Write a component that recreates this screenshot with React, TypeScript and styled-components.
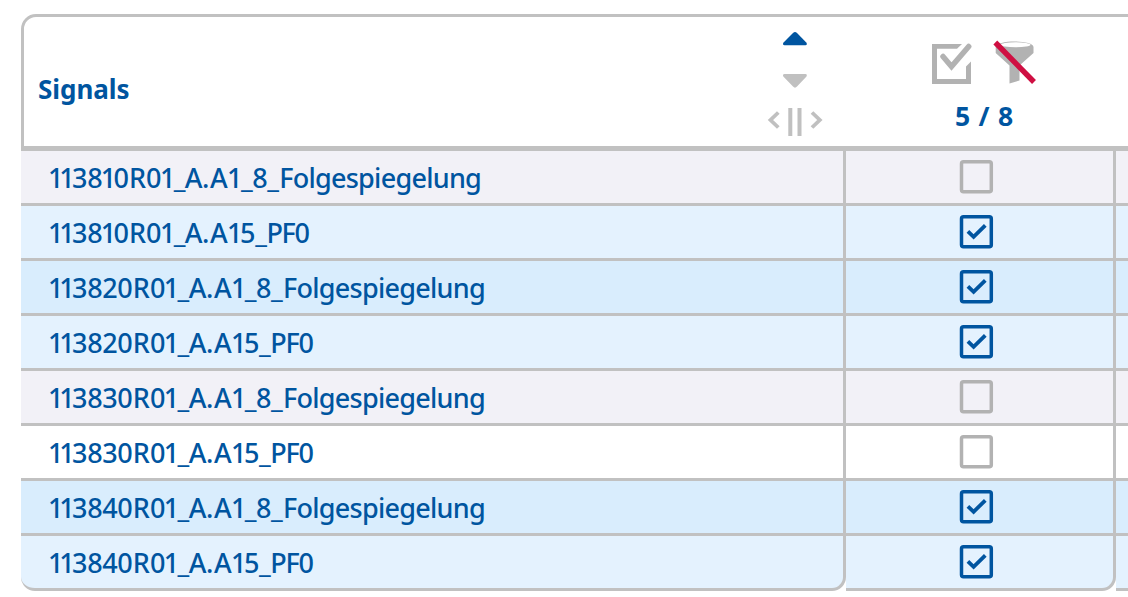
import React from "react";
import styled, { createGlobalStyle } from "styled-components";

const BLUE = "#0055a0";
const LINE = "#c1c1c1";
const FONT = '"Noto Sans", "Open Sans", sans-serif';

const Global = createGlobalStyle`
  body { margin: 0; background: #fff; overflow: hidden; }
  * { box-sizing: border-box; }
`;

const Page = styled.div`
  width: 1128px;
  height: 597px;
  padding: 14px 0 0 21px;
  overflow: hidden;
  font-family: ${FONT};
  color: ${BLUE};
`;

const Table = styled.div`
  width: 1377px;
`;

const Header = styled.div`
  display: grid;
  grid-template-columns: 822px 270px 1fr;
  height: 137px;
  border: 3px solid ${LINE};
  border-bottom: 5px solid ${LINE};
  border-radius: 15px 15px 0 0;
`;

const SignalsHead = styled.div`
  display: flex;
  justify-content: space-between;
  padding-left: 14px;
`;

const Title = styled.div`
  font-size: 26px;
  line-height: 36px;
  font-weight: 700;
  margin-top: 54px;
  letter-spacing: -0.05px;
`;

const CheckHead = styled.div`
  display: flex;
  flex-direction: column;
  align-items: center;
`;

const Icons = styled.div`
  display: flex;
  height: 50px;
  margin: 20px 0 0 7px;
`;

const Count = styled.div`
  font-size: 26.5px;
  line-height: 36px;
  font-weight: 700;
  word-spacing: 1.5px;
  margin: 11px 0 0 6px;
`;

const Row = styled.div<{ $bg: string }>`
  display: grid;
  grid-template-columns: 825px 270px 1fr;
  grid-template-rows: 55px;

  & > div {
    background: ${(p) => p.$bg};
    border-bottom: 3px solid ${LINE};
    border-right: 3px solid ${LINE};
  }
  &:last-child > div {
    border-bottom-right-radius: 14px;
  }
  &:last-child > div:first-child {
    border-bottom-left-radius: 14px;
  }
`;

const NameCell = styled.div`
  padding: 1px 0 0 27px;
  font-size: 27px;
  font-weight: 500;
  line-height: 51px;
  white-space: nowrap;
`;

const Glyph = styled.span<{ $track: number }>`
  letter-spacing: ${(p) => p.$track}px;
`;

const CheckCell = styled.div`
  display: flex;
  justify-content: center;
  padding: 8px 7px 0 0;
`;

const EmptyCell = styled.div``;

// Pair spacing in px: the narrow figure one is set tight against its neighbours.
const PAIRS: Record<string, number> = {
  "11": -4.1,
  "13": -2.8,
  "10": -2.6,
  "15": -2.4,
  "1_": -1.6,
  "81": -1.9,
  "01": -1.6,
  "A1": -0.7,
  _A: -0.7,
  "A.": -0.4,
  ".A": 0.6,
  _8: -0.5,
  _F: 0.2,
  _P: -0.5,
  PF: -1.3,
  F0: -1.3,
  "0R": 0,
  R0: 0,
};

const tracking = (pair: string) =>
  PAIRS[pair] ?? (/[a-zF]/.test(pair[0]) ? -0.75 : -0.35);

const SignalName = ({ name }: { name: string }) => (
  <>
    {name.split("").map((c, i) => (
      <Glyph key={i} $track={tracking(name.slice(i, i + 2))}>
        {c}
      </Glyph>
    ))}
  </>
);

const SortIcons = () => (
  <svg width="80" height="129" viewBox="766 17 80 129" fill="none">
    <path d="M783.300 42.800 L793 33 Q795 31 797 33 L806.500 42.800 Q807.500 45 805.500 45.200 H784.500 Q782.300 45 783.300 42.800 Z" fill={BLUE} />
    <path d="M783.300 76.500 L793 86.500 Q795 88.800 797 86.500 L806.500 76.500 Q807.500 74.200 805.500 74 H784.500 Q782.300 74.200 783.300 76.500 Z" fill="#c0c0c0" />
    <path d="M778.300 112.500 L770.500 120 L778.300 127.500 M812 112.500 L819.800 120 L812 127.500" stroke="#c0c0c0" strokeWidth="3.800" />
    <path d="M790.300 108 V136 M799.500 108 V136" stroke="#c0c0c0" strokeWidth="4" />
  </svg>
);

const HeadIcons = () => (
  <svg width="110" height="50" viewBox="930 37 110 50" fill="none">
    <path d="M932 44 H962 L957 48.800 H937 V79 H966 V66.500 L971 61.500 V84 H932 Z" fill="#b2b2b2" />
    <path d="M943 56.500 L951.500 66.500 L968.700 46.500" stroke="#b2b2b2" strokeWidth="5.500" strokeLinecap="round" />
    <path d="M995.700 47 C995.700 39.500 1033.500 39.500 1033.500 47 V53 L1019.500 65.500 V80.500 L1009.500 83.500 V65.500 L995.700 53 Z" fill="#b2b2b2" />
    <ellipse cx="1015.500" cy="44.800" rx="15" ry="2.500" fill="#fff" />
    <path d="M995.300 42.500 L1034 82" stroke="#cf0f42" strokeWidth="5.400" />
  </svg>
);

const Checkbox = ({ checked }: { checked: boolean }) => (
  <svg width="36" height="36" viewBox="0 0 36 36" fill="none">
    <rect x="3.500" y="2.800" width="29.800" height="29.900" rx="2" stroke={checked ? BLUE : "#b2b2b2"} strokeWidth="3.500" />
    {checked && <path d="M9.900 17.300 L15.600 22.800 L27.300 11.300" stroke={BLUE} strokeWidth="3.800" />}
  </svg>
);

const rows: { name: string; on: boolean; bg: string }[] = [
  { name: "113810R01_A.A1_8_Folgespiegelung", on: false, bg: "#f2f1f7" },
  { name: "113810R01_A.A15_PF0", on: true, bg: "#e4f2fe" },
  { name: "113820R01_A.A1_8_Folgespiegelung", on: true, bg: "#d9edfd" },
  { name: "113820R01_A.A15_PF0", on: true, bg: "#e4f2fe" },
  { name: "113830R01_A.A1_8_Folgespiegelung", on: false, bg: "#f2f1f7" },
  { name: "113830R01_A.A15_PF0", on: false, bg: "#ffffff" },
  { name: "113840R01_A.A1_8_Folgespiegelung", on: true, bg: "#d9edfd" },
  { name: "113840R01_A.A15_PF0", on: true, bg: "#e4f2fe" },
];

export default function App() {
  return (
    <Page>
      <Global />
      <Table>
        <Header>
          <SignalsHead>
            <Title>Signals</Title>
            <SortIcons />
          </SignalsHead>
          <CheckHead>
            <Icons>
              <HeadIcons />
            </Icons>
            <Count>5 / 8</Count>
          </CheckHead>
        </Header>
        <div>
          {rows.map((r) => (
            <Row key={r.name} $bg={r.bg}>
              <NameCell>
                <SignalName name={r.name} />
              </NameCell>
              <CheckCell>
                <Checkbox checked={r.on} />
              </CheckCell>
              <EmptyCell />
            </Row>
          ))}
        </div>
      </Table>
    </Page>
  );
}
